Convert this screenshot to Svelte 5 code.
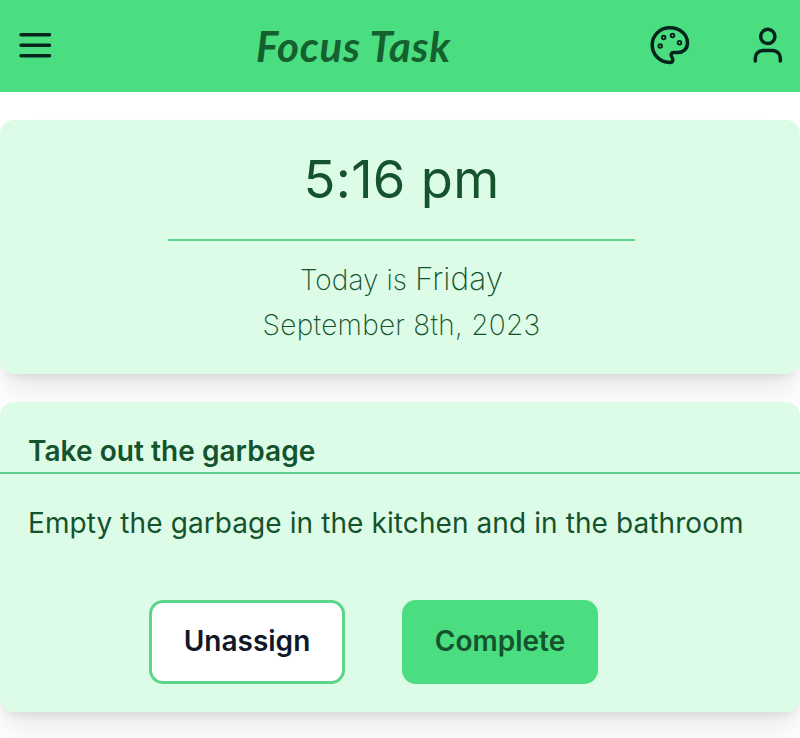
<script>
  const task = {
    title: 'Take out the garbage',
    description: 'Empty the garbage in the kitchen and in the bathroom'
  };
  const holes = [[660.2, 46], [663.7, 37.5], [672.5, 35.5], [679.5, 42.7]];
</script>

<div class="page">
  <header>
    <button class="icon menu" aria-label="Menu">
      <svg width="36" height="36" viewBox="17 27 36 36">
        <path d="M21 34.7H49.5M21 45.2H49.5M21 55.7H49.5" />
      </svg>
    </button>
    <h1>Focus Task</h1>
    <div class="actions">
      <button class="icon" aria-label="Theme">
        <svg width="42" height="42" viewBox="649 24 42 42">
          <path d="M669.5 62.4C660 62.4 652.2 54.5 652.2 45C652.2 35 660 27.8 670 27.8C680 27.8 687.5 34.5 687.5 43C687.5 49 683 52.6 678 52.6H674C671 52.6 670.6 54.6 671.6 56.5C672.8 58.6 673.4 60.3 672.3 61.6Q671.4 62.4 669.5 62.4Z" />
          {#each holes as [cx, cy]}
            <circle class="hole" {cx} {cy} r="1.8" />
          {/each}
        </svg>
      </button>
      <button class="icon" aria-label="Account">
        <svg width="32" height="42" viewBox="752 24 32 42">
          <circle cx="767.8" cy="36.4" r="7.1" />
          <path d="M755.3 61V58A7.5 7.5 0 0 1 762.8 50.5H772.8A7.5 7.5 0 0 1 780.3 58V61" />
        </svg>
      </button>
    </div>
  </header>

  <section class="card clock">
    <div class="time">5:16 pm</div>
    <hr />
    <p class="today">Today is <span>Friday</span></p>
    <p class="date">September 8th, 2023</p>
  </section>

  <section class="card task">
    <h2><span>{task.title}</span></h2>
    <p class="desc">{task.description}</p>
    <div class="buttons">
      <button class="btn outline">Unassign</button>
      <button class="btn solid">Complete</button>
    </div>
  </section>
</div>

<style>
  :global(body) { background: #fff; overflow: hidden; }
  .page {
    height: 738px;
    overflow: hidden;
    font-family: Inter, sans-serif;
    font-size: 28px;
    color: #14532d;
  }
  h1, h2, p { margin: 0; }
  button { font-family: inherit; cursor: pointer; }
  header {
    height: 92px;
    box-sizing: border-box;
    padding: 0 16px 2px 17px;
    background: #4ade80;
    display: flex;
    justify-content: space-between;
    align-items: center;
  }
  .icon { padding: 0; border: 0; background: none; display: flex; }
  .icon svg {
    fill: none;
    stroke: #04241c;
    stroke-width: 3.5;
    stroke-linecap: round;
    stroke-linejoin: round;
  }
  .icon .hole { stroke-width: 1.9; }
  h1 {
    font: italic 700 42px/50px Lato, sans-serif;
    letter-spacing: .7px;
    color: #14602f;
    white-space: nowrap;
    padding: 2px 0 0 5px;
  }
  .actions { display: flex; gap: 61px; }
  .card {
    box-sizing: border-box;
    background: #dcfce7;
    border-radius: 14px;
    margin-top: 28px;
    box-shadow: 0 20px 30px -4px rgba(0, 0, 0, .09), 0 7px 10.5px -6px rgba(0, 0, 0, .12);
  }
  .clock { height: 254px; padding-top: 28px; text-align: center; }
  .time { font-size: 52.5px; line-height: 63px; letter-spacing: .3px; padding-left: 3px; }
  hr { width: 467px; height: 2px; margin: 28px auto 0 168px; border: 0; background: #5bd58a; }
  .today, .date { font-weight: 200; padding-left: 3px; line-height: 46px; }
  .today { letter-spacing: .06px; margin-top: 15px; }
  .today span { font-size: 31.5px; letter-spacing: .1px; }
  .date { letter-spacing: .27px; margin-top: -1px; }
  .task { height: 310px; padding-top: 28px; }
  h2 {
    height: 42px;
    padding-left: 28px;
    border-bottom: 2px solid #62cf91;
    font-size: 28px;
    line-height: 42px;
    letter-spacing: .05px;
    font-weight: 600;
  }
  .desc { padding: 28px 28px 0; line-height: 42px; letter-spacing: .09px; white-space: nowrap; }
  .buttons { display: flex; gap: 57px; padding: 56px 0 0 149px; }
  .btn {
    width: 196px;
    height: 84px;
    box-sizing: border-box;
    padding: 0 0 2px;
    border-radius: 14px;
    font-size: 28px;
    font-weight: 600;
  }
  .outline { background: #fff; color: #111827; border: 3px solid #5bd58a; }
  .solid { background: #4ade80; color: #14532d; border: 0; }
</style>
